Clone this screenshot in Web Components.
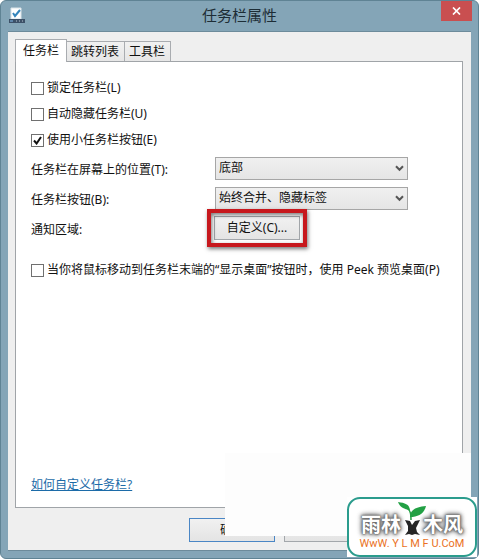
<!DOCTYPE html>
<html lang="zh-CN">
<head>
<meta charset="utf-8">
<meta name="viewport" content="width=device-width, initial-scale=1">
<title>任务栏属性</title>
<style>
    body { margin: 0; background: #fff; color: #111; font: 12px/16px "Noto Sans", "Noto Sans CJK SC", sans-serif; }
</style>
</head>
<body>
<properties-dialog heading="任务栏属性">
    <tab-strip slot="tabs" labels="任务栏,跳转列表,工具栏"></tab-strip>

    <check-option>锁定任务栏(L)</check-option>
    <check-option>自动隐藏任务栏(U)</check-option>
    <check-option checked>使用小任务栏按钮(E)</check-option>
    <select-row label="任务栏在屏幕上的位置(T):" options="底部,左侧,右侧,顶部"></select-row>
    <select-row label="任务栏按钮(B):" options="始终合并、隐藏标签,当任务栏被占满时合并,从不合并"></select-row>
    <button-row label="通知区域:">自定义(C)...</button-row>
    <check-option class="peek">当你将鼠标移动到任务栏末端的“显示桌面”按钮时，使用 Peek 预览桌面(P)</check-option>
    <help-link>如何自定义任务栏?</help-link>

    <push-button slot="actions" primary>确定</push-button>
    <push-button slot="actions"></push-button>
    <push-button slot="actions"></push-button>
    <site-badge slot="badge"></site-badge>
</properties-dialog>

<script>
class PropertiesDialog extends HTMLElement {
    constructor() {
        super();
        this.attachShadow({ mode: 'open' });

        this.shadowRoot.innerHTML = `
            <style>
                :host { display: flex; flex-direction: column; box-sizing: border-box; position: relative; min-height: 100vh; padding: 0 7px 7px; background: #84a5b7; border: 1px solid #5f8394; border-radius: 6px; }
                header { display: grid; grid-template-columns: 30px 1fr 30px; align-items: start; height: 30px; }
                h1 { margin: 0; padding-top: 3px; font-size: 15px; line-height: 22px; font-weight: 400; text-align: center; color: #1d2d36; }
                header > svg { margin-top: 6px; }
                .close { display: grid; place-items: center; width: 31px; height: 20px; padding: 0; border: 0; background: #c94f50; }
                main { flex: 1; display: flex; flex-direction: column; padding: 7px 8px 8px 7px; background: #efefef; border: 1px solid #6d8b9b; border-width: 1px 0; }
                section { flex: 1; display: flex; flex-direction: column; padding: 13px 15px 12px; background: #fff; border: 1px solid #a0a4a8; }
                footer { display: flex; gap: 9px; justify-content: flex-end; padding-top: 10px; margin-right: -2px; }
                ::slotted(.peek) { margin-top: 14px; }
                ::slotted(help-link) { margin-top: auto; }
            </style>
            <header>
                <svg width="18" height="18" viewBox="0 0 18 18" aria-hidden="true">
                    <path d="M3 1h10v11H3z" fill="#fff" stroke="#d9e3e8"/>
                    <path d="M5 6l2 3 5-6" fill="none" stroke="#3585bb" stroke-width="2"/>
                    <path d="M1 12h16v4H1z" fill="#3d5168"/>
                    <path d="M2 13h3v2H2z" fill="#5f86aa"/>
                    <path d="M8 14h1m2 0h1m2 0h1" stroke="#b7c5d0"/>
                </svg>
                <h1></h1>
                <button class="close" type="button" aria-label="关闭">
                    <svg width="9" height="8" viewBox="0 0 9 8"><path d="M1 0.5l7 7M8 0.5l-7 7" stroke="#fff" stroke-width="1.7"/></svg>
                </button>
            </header>
            <main>
                <slot name="tabs"></slot>
                <section><slot></slot></section>
                <footer><slot name="actions"></slot></footer>
            </main>
            <slot name="badge"></slot>
        `;
    }

    connectedCallback() {
        this.shadowRoot.querySelector('h1').textContent = this.getAttribute('heading');
    }
}

class TabStrip extends HTMLElement {
    constructor() {
        super();
        this.attachShadow({ mode: 'open' });

        this.shadowRoot.innerHTML = `
            <style>
                :host { display: flex; align-items: flex-end; }
                button { height: 20px; padding: 0 5px 0 4px; border: 1px solid #a9acb0; border-width: 1px 1px 0 0; background: linear-gradient(#f1f1f1, #e6e6e6); color: inherit; font: inherit; }
                button[aria-selected="true"] { position: relative; height: 23px; margin-bottom: -1px; padding: 0 7px; border-left-width: 1px; background: #fff; }
            </style>
        `;
    }

    connectedCallback() {
        this.setAttribute('role', 'tablist');
        this.getAttribute('labels').split(',').forEach((label, index) => {
            const tab = document.createElement('button');
            tab.type = 'button';
            tab.setAttribute('role', 'tab');
            tab.setAttribute('aria-selected', index === 0);
            tab.textContent = label;
            this.shadowRoot.appendChild(tab);
        });

        this.shadowRoot.addEventListener('click', (event) => {
            if (!event.target.matches('button')) return;
            this.shadowRoot.querySelectorAll('button').forEach((tab) => {
                tab.setAttribute('aria-selected', tab === event.target);
            });
        });
    }
}

class CheckOption extends HTMLElement {
    constructor() {
        super();
        this.attachShadow({ mode: 'open' });

        this.shadowRoot.innerHTML = `
            <style>
                :host { display: flex; align-items: center; min-height: 26px; }
                label { display: flex; align-items: center; gap: 3px; white-space: nowrap; }
                .box { display: grid; place-items: center; }
                input, svg { grid-area: 1 / 1; }
                input { appearance: none; width: 13px; height: 13px; margin: 0; border: 1px solid #707070; background: #fff; }
                svg { visibility: hidden; pointer-events: none; }
                input:checked + svg { visibility: visible; }
            </style>
            <label>
                <span class="box">
                    <input type="checkbox">
                    <svg width="9" height="9" viewBox="0 0 9 9"><path d="M1 4.5L3.6 7.5L8 1" fill="none" stroke="#111" stroke-width="2"/></svg>
                </span>
                <span><slot></slot></span>
            </label>
        `;
    }

    connectedCallback() {
        this.shadowRoot.querySelector('input').checked = this.hasAttribute('checked');
    }
}

class SelectRow extends HTMLElement {
    constructor() {
        super();
        this.attachShadow({ mode: 'open' });

        this.shadowRoot.innerHTML = `
            <style>
                :host { display: grid; grid-template-columns: 184px minmax(0, 193px); align-items: center; min-height: 30px; }
                label { padding-top: 4px; }
                .field { display: grid; align-items: center; }
                select, svg { grid-area: 1 / 1; }
                select { appearance: none; width: 100%; height: 23px; margin: 0; padding: 0 20px 0 3px; border: 1px solid #a6a6a6; border-radius: 0; background: linear-gradient(#f0f0f0, #e5e5e5); color: inherit; font: inherit; }
                svg { justify-self: end; margin-right: 4px; pointer-events: none; }
            </style>
            <label for="choice"></label>
            <span class="field">
                <select id="choice"></select>
                <svg width="9" height="7" viewBox="0 0 9 7"><path d="M1 1.2l3.5 3.6L8 1.2" fill="none" stroke="#555" stroke-width="2"/></svg>
            </span>
        `;
    }

    connectedCallback() {
        this.shadowRoot.querySelector('label').textContent = this.getAttribute('label');
        const select = this.shadowRoot.querySelector('select');
        this.getAttribute('options').split(',').forEach((text) => select.add(new Option(text)));
    }
}

class ButtonRow extends HTMLElement {
    constructor() {
        super();
        this.attachShadow({ mode: 'open' });

        this.shadowRoot.innerHTML = `
            <style>
                :host { display: grid; grid-template-columns: 183px auto; align-items: center; justify-content: start; min-height: 30px; }
                #caption { padding-top: 4px; }
                .marked { position: relative; display: flex; }
                /* red frame over the button */
                .marked::after { content: ""; position: absolute; inset: -7px; border: 4px solid #c7181d; box-shadow: 1px 2px 4px #0008, inset 1px 2px 4px #0008; pointer-events: none; }
            </style>
            <span id="caption"></span>
            <span class="marked"><push-button><slot></slot></push-button></span>
        `;
    }

    connectedCallback() {
        this.shadowRoot.querySelector('#caption').textContent = this.getAttribute('label');
    }
}

class PushButton extends HTMLElement {
    constructor() {
        super();
        this.attachShadow({ mode: 'open' });

        this.shadowRoot.innerHTML = `
            <style>
                :host { display: block; }
                button { display: block; width: 86px; height: 24px; padding: 0; border: 1px solid #a3a7ab; background: linear-gradient(#f1f1f1, #e4e4e4); color: inherit; font: inherit; }
                :host([primary]) button { border-color: #4a86c5; }
            </style>
            <button type="button"><slot></slot></button>
        `;
    }
}

class HelpLink extends HTMLElement {
    constructor() {
        super();
        this.attachShadow({ mode: 'open' });

        this.shadowRoot.innerHTML = `
            <style>
                :host { display: block; padding-bottom: 2px; }
                a { color: #1c6ba8; }
            </style>
            <a href="#help"><slot></slot></a>
        `;
    }
}

class SiteBadge extends HTMLElement {
    constructor() {
        super();
        this.attachShadow({ mode: 'open' });

        this.shadowRoot.innerHTML = `
            <style>
                :host { position: absolute; right: 0; bottom: 0; width: 253px; height: 105px; pointer-events: none; }
                .sheet { position: absolute; inset: 0 7px 22px 0; background: #fdfdfd; }
                .card { position: absolute; right: 1px; bottom: 1px; box-sizing: border-box; width: 130px; height: 60px; background: #fff; }
                .frame { box-sizing: border-box; height: 60px; padding-top: 3px; border: 2px solid #2b9c8d; border-radius: 13px; }
                .name { display: flex; justify-content: center; align-items: flex-end; height: 35px; font: 700 20px/26px "Noto Sans CJK SC", sans-serif; color: #fff; text-shadow: 0 0 1px #666, 0 0 2px #666, 0 0 3px #777, 0 0 4px #777, 0 0 5px #888, 0 0 6px #888; }
                .url { text-align: center; font: 11px/14px Roboto, sans-serif; color: #ea7125; white-space: nowrap; }
                svg { margin: 0 -4px; }
            </style>
            <div class="sheet"></div>
            <div class="card">
                <div class="frame">
                    <div class="name">
                        <span>雨林</span>
                        <svg width="30" height="35" viewBox="0 0 30 35" aria-hidden="true">
                            <path d="M8 18l5 1 2 4 3-4 5-1-4 8 1 4 3 3-5-1-3 1-3-1-4 1 3-4v-5z" fill="#252525"/>
                            <path d="M13 15c0-6 4-10 16-11-2 8-8 11-16 11z" fill="#22a044"/>
                            <path d="M1 0c7 1 11 2 12 8C6 7 3 5 1 0z" fill="#22a044"/>
                            <path d="M10 6c4 3 4 7 4 12" fill="none" stroke="#22a044" stroke-width="1.5"/>
                        </svg>
                        <span>木风</span>
                    </div>
                    <div class="url">WwW. Y L M F U.CoM</div>
                </div>
            </div>
        `;
    }
}

customElements.define('properties-dialog', PropertiesDialog);
customElements.define('tab-strip', TabStrip);
customElements.define('check-option', CheckOption);
customElements.define('select-row', SelectRow);
customElements.define('push-button', PushButton);
customElements.define('button-row', ButtonRow);
customElements.define('help-link', HelpLink);
customElements.define('site-badge', SiteBadge);
</script>
</body>
</html>
